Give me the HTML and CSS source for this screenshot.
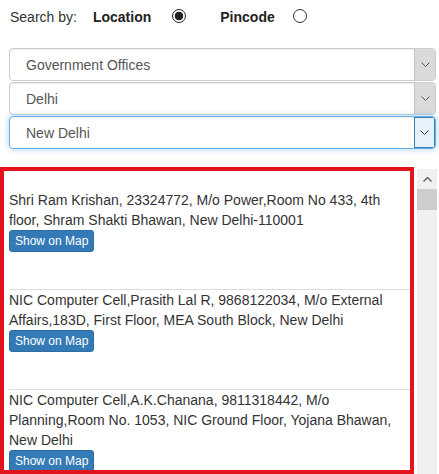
FILE: index.html
```html
<!DOCTYPE html>
<html lang="en">
<head>
    <meta charset="UTF-8">
    <meta name="viewport" content="width=device-width, initial-scale=1.0">
    <title>Directory Search</title>
    <link rel="stylesheet" href="styles.css">
</head>
<body>
    <div class="search-by">
        <span class="search-label">Search by:</span>
        <label class="option">Location <span class="radio checked"></span></label>
        <label class="option">Pincode <span class="radio"></span></label>
    </div>

    <div class="selects">
        <div class="select-box">
            <span class="select-text">Government Offices</span>
            <span class="select-arrow"><svg width="9" height="5" viewBox="0 0 9 5"><polyline points="0.5,0.5 4.5,4.5 8.5,0.5" fill="none" stroke="#555" stroke-width="1"/></svg></span>
        </div>
        <div class="select-box">
            <span class="select-text">Delhi</span>
            <span class="select-arrow"><svg width="9" height="5" viewBox="0 0 9 5"><polyline points="0.5,0.5 4.5,4.5 8.5,0.5" fill="none" stroke="#555" stroke-width="1"/></svg></span>
        </div>
        <div class="select-box focused">
            <span class="select-text">New Delhi</span>
            <span class="select-arrow"><svg width="9" height="5" viewBox="0 0 9 5"><polyline points="0.5,0.5 4.5,4.5 8.5,0.5" fill="none" stroke="#333" stroke-width="1"/></svg></span>
        </div>
    </div>

    <div class="results-wrap">
        <div class="results">
            <div class="result-item">
                <p class="result-text">Shri Ram Krishan, 23324772, M/o Power,Room No 433, 4th floor, Shram Shakti Bhawan, New Delhi-110001</p>
                <button class="map-btn">Show on Map</button>
            </div>
            <div class="result-item">
                <p class="result-text">NIC Computer Cell,Prasith Lal R, 9868122034, M/o External Affairs,183D, First Floor, MEA South Block, New Delhi</p>
                <button class="map-btn">Show on Map</button>
            </div>
            <div class="result-item">
                <p class="result-text">NIC Computer Cell,A.K.Chanana, 9811318442, M/o Planning,Room No. 1053, NIC Ground Floor, Yojana Bhawan, New Delhi</p>
                <button class="map-btn">Show on Map</button>
            </div>
        </div>
        <div class="scrollbar">
            <span class="scroll-up"><svg width="9" height="5" viewBox="0 0 9 5"><polyline points="0.5,4.5 4.5,0.5 8.5,4.5" fill="none" stroke="#606060" stroke-width="1.4"/></svg></span>
            <span class="scroll-thumb"></span>
        </div>
    </div>
</body>
</html>
```
FILE: styles.css
```css
body {
    margin: 0;
    font-family: "Liberation Sans", Arial, sans-serif;
    font-size: 14px;
    line-height: 20px;
    color: #333;
    background-color: #fff;
    overflow: hidden;
}

.search-by {
    display: flex;
    align-items: center;
    padding: 7px 0 0 10px;
    height: 20px;
}

.search-label {
    margin-right: 16px;
}

.option {
    display: flex;
    align-items: center;
    font-weight: bold;
    color: #222;
}

.option:first-of-type .radio {
    margin: 0 34px 0 21px;
}

.option:last-of-type .radio {
    margin-left: 18px;
}

.radio {
    display: inline-block;
    width: 14px;
    height: 14px;
    border: 1px solid #333;
    border-radius: 50%;
    box-sizing: border-box;
    background-color: #fff;
    position: relative;
    top: -1px;
}

.radio.checked {
    border-color: #222;
    background: radial-gradient(circle, #222 0, #222 4px, #fff 4.6px);
}

.selects {
    display: flex;
    flex-direction: column;
    gap: 1px;
    padding: 21px 3px 0 9px;
}

.select-box {
    display: flex;
    align-items: stretch;
    height: 33px;
    border: 1px solid #ccc;
    border-radius: 4px;
    box-sizing: border-box;
    overflow: hidden;
    box-shadow: inset 0 1px 1px rgba(0, 0, 0, 0.075);
    color: #555;
}

.select-text {
    flex: 1;
    display: flex;
    align-items: center;
    padding-left: 16px;
}

.select-arrow {
    width: 20px;
    display: flex;
    align-items: center;
    justify-content: center;
    background-color: #dadada;
    border-left: 1px solid #c4c4c4;
}

.select-box.focused {
    border-color: #66afe9;
    box-shadow: inset 0 1px 1px rgba(0, 0, 0, 0.075), 0 0 6px rgba(102, 175, 233, 0.6);
}

.select-box.focused .select-arrow {
    background-color: #e5f1fb;
    border-left-color: #3c7fb1;
    border-right: 1px solid #3c7fb1;
    border-top: 1px solid #3c7fb1;
    border-bottom: 1px solid #3c7fb1;
    width: 19px;
}

.results-wrap {
    display: flex;
    gap: 3px;
    margin-top: 18px;
    height: 307px;
}

.results {
    width: 414px;
    box-sizing: border-box;
    border: 4px solid #e4141f;
    padding: 19px 0 0 5px;
    overflow: hidden;
}

.result-item {
    padding-bottom: 37px;
    border-bottom: 1px solid #ddd;
}

.result-text {
    margin: 0;
    padding-right: 0;
}

.map-btn {
    display: block;
    font-family: "Liberation Sans", Arial, sans-serif;
    font-size: 12px;
    line-height: 18px;
    padding: 1px 5px;
    color: #fff;
    background-color: #337ab7;
    border: 1px solid #2e6da4;
    border-radius: 3px;
}

.scrollbar {
    width: 20px;
    margin-top: 2px;
    background-color: #f0f0f0;
    display: flex;
    flex-direction: column;
}

.scroll-up {
    height: 20px;
    display: flex;
    align-items: center;
    justify-content: center;
}

.scroll-thumb {
    height: 21px;
    background-color: #cdcdcd;
}
```
